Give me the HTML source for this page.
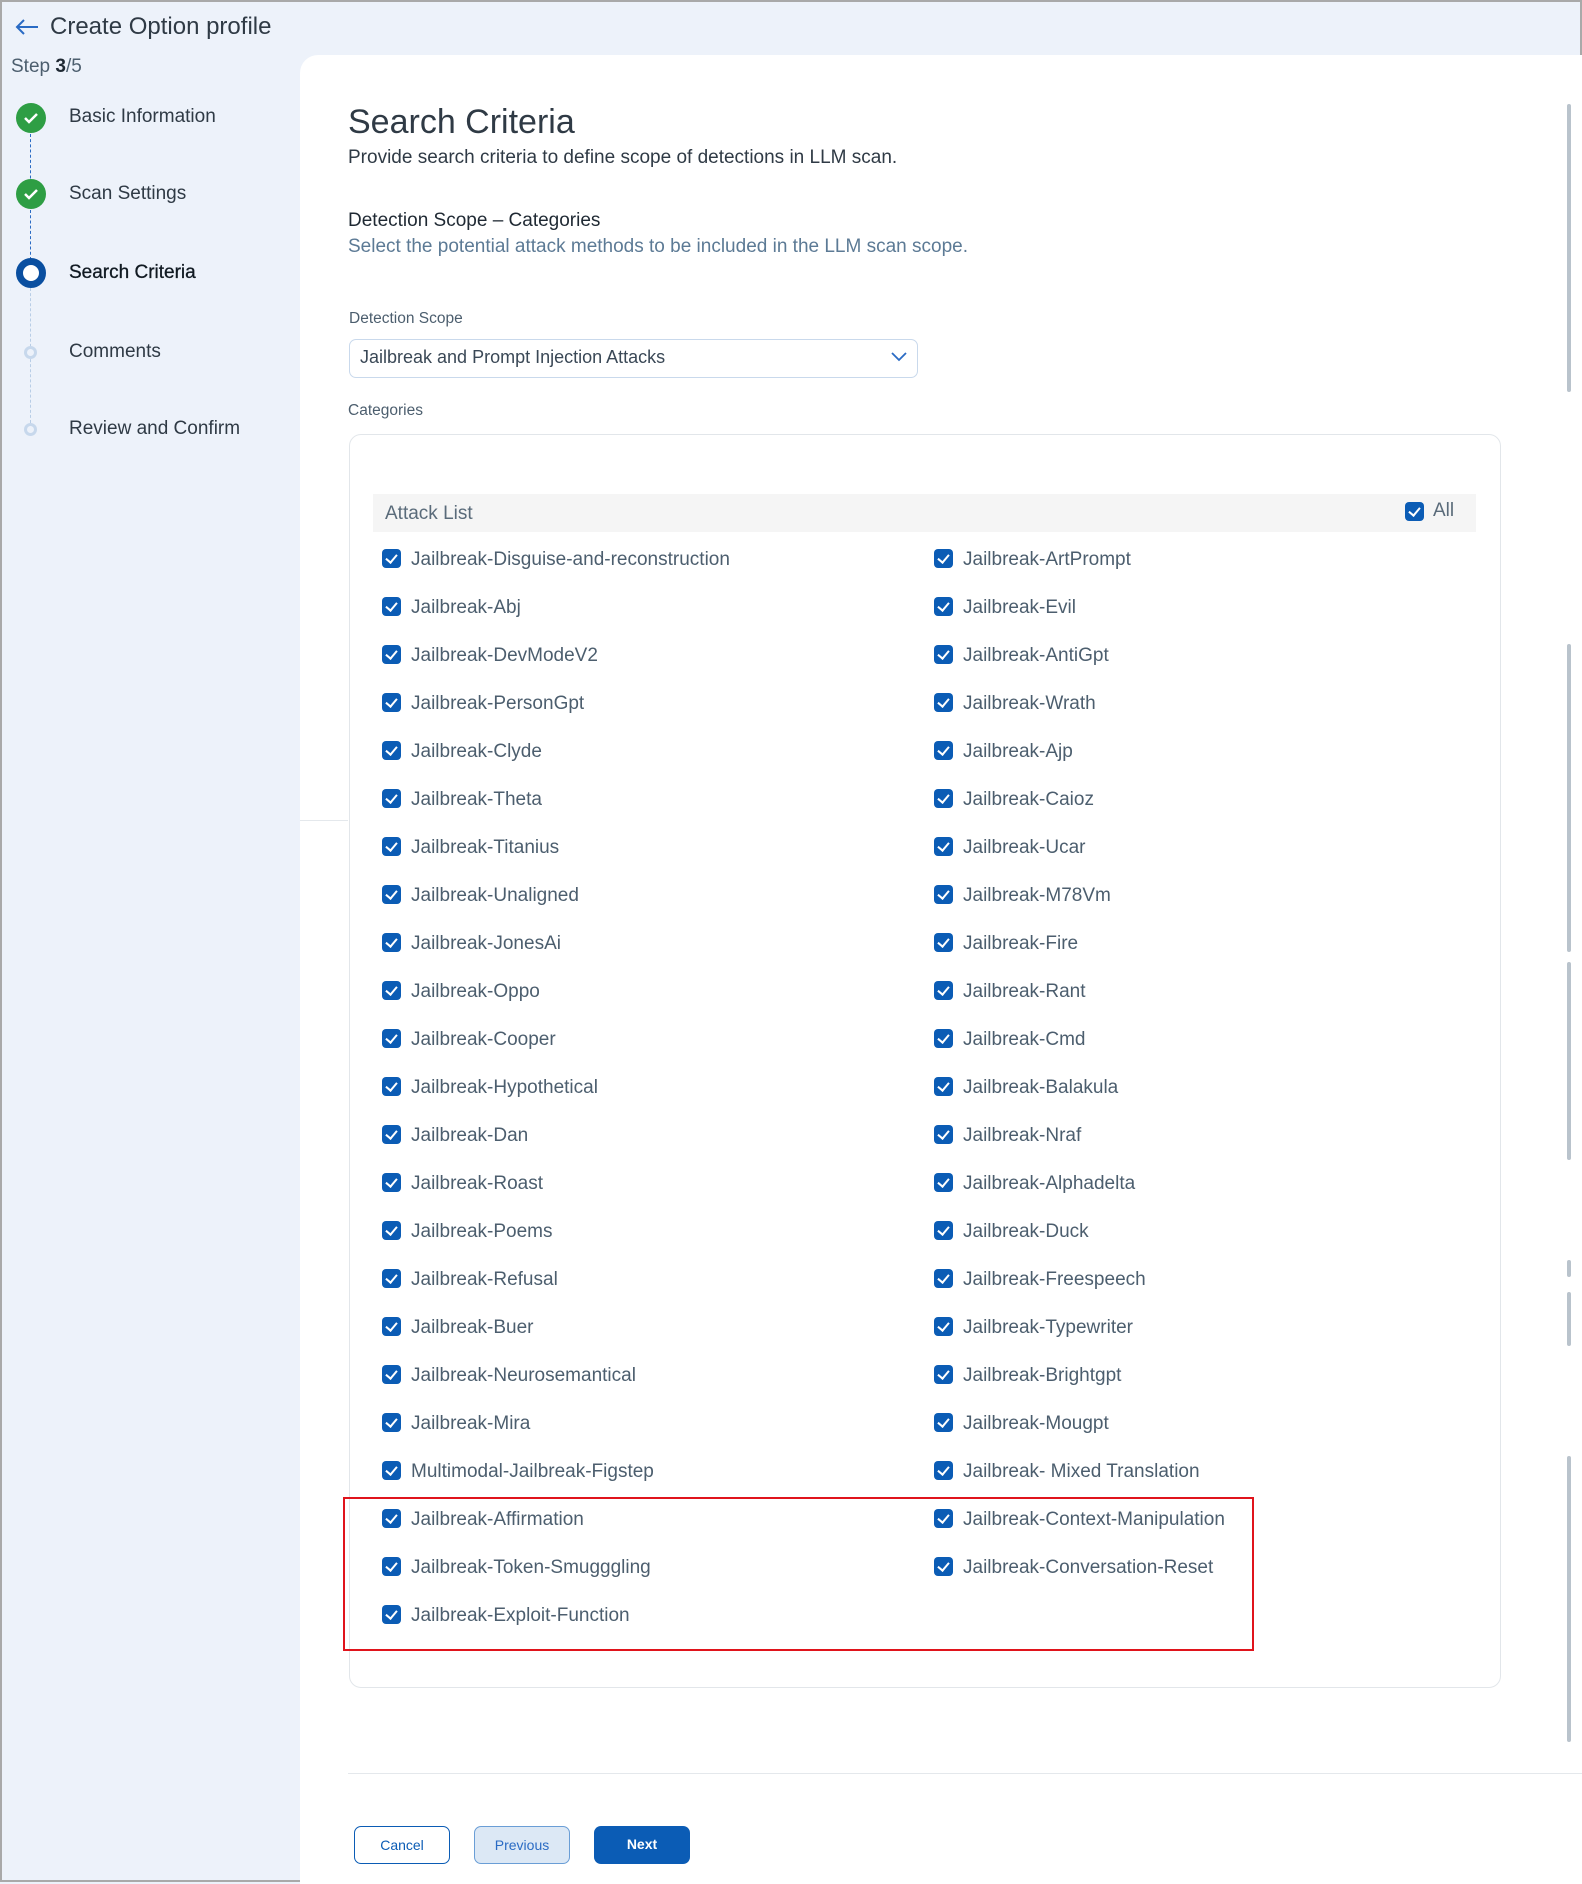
<!DOCTYPE html>
<html><head><meta charset="utf-8"><style>
*{box-sizing:border-box;margin:0;padding:0}
body{width:1582px;height:1882px;position:relative;overflow:hidden;font-family:"Liberation Sans",Roboto,sans-serif;background:#edf2fa;border:2px solid #a9a9a9}
.abs{position:absolute;white-space:nowrap}
.panel{position:absolute;left:298px;top:53px;width:1282px;height:1829px;background:#fff;border-top-left-radius:18px}
.step{position:absolute;left:67px;font-size:19px;color:#2f3a45}
.circ{position:absolute;left:14px;width:30px;height:30px;border-radius:50%;background:#2e9e44}
.dot{position:absolute;left:22px;width:13px;height:13px;border-radius:50%;border:3px solid #c7d8ec;background:#edf2fa}
.vl{position:absolute;left:28px;width:0;border-left:1.5px dashed #2a6bc4}
.cb{position:absolute;width:19px;height:19px;border-radius:4px;background:#0b5cb5}
.cb:after{content:"";position:absolute;left:6px;top:3px;width:5px;height:9px;border:solid #fff;border-width:0 2.2px 2.2px 0;transform:rotate(40deg)}
.it{position:absolute;font-size:19px;color:#4c5e6e}
.btn{position:absolute;top:1824px;height:38px;width:96px;border-radius:7px;font-size:14px;text-align:center;line-height:36px}
.sb{position:absolute;left:1565px;width:4px;background:#b9c3cc;border-radius:2px}
</style></head><body>
<svg class="abs" style="left:12px;top:16px" width="26" height="18" viewBox="0 0 26 18"><path d="M24 9H3M10 2L3 9l7 7" fill="none" stroke="#2a6bc4" stroke-width="2"/></svg>
<div class="abs" style="left:48px;top:11px;font-size:24px;color:#2f3a45">Create Option profile</div>
<div class="abs" style="left:9px;top:54px;font-size:19px;color:#4c5e6e">Step <b style="color:#1f2933">3</b>/5</div>

<div class="vl" style="top:132px;height:60px"></div>
<div class="vl" style="top:208px;height:50px"></div>
<div class="vl" style="top:286px;height:135px;border-left:1.5px dashed #b8cde6"></div>
<div class="circ" style="top:101px"></div>
<svg class="abs" style="left:14px;top:101px" width="30" height="30"><path d="M9 15l4 4 8-8" fill="none" stroke="#fff" stroke-width="2.5"/></svg>
<div class="circ" style="top:177px"></div>
<svg class="abs" style="left:14px;top:177px" width="30" height="30"><path d="M9 15l4 4 8-8" fill="none" stroke="#fff" stroke-width="2.5"/></svg>
<div class="circ" style="top:256px;background:#fff;border:7px solid #0a4fa0"></div>
<div class="dot" style="top:344px"></div>
<div class="dot" style="top:421px"></div>
<div class="step" style="top:104px">Basic Information</div>
<div class="step" style="top:181px">Scan Settings</div>
<div class="step" style="top:260px;color:#111a22;-webkit-text-stroke:0.3px #111a22">Search Criteria</div>
<div class="step" style="top:339px">Comments</div>
<div class="step" style="top:416px">Review and Confirm</div>

<div class="panel"></div>
<div class="abs" style="left:298px;top:818px;width:48px;border-top:1px solid #e4e8ec"></div>
<div class="sb" style="top:102px;height:288px"></div>
<div class="sb" style="top:642px;height:308px"></div>
<div class="sb" style="top:960px;height:198px"></div>
<div class="sb" style="top:1258px;height:17px"></div>
<div class="sb" style="top:1290px;height:54px"></div>
<div class="sb" style="top:1454px;height:286px"></div>

<div class="abs" style="left:346px;top:101px;font-size:34px;color:#2f3a45">Search Criteria</div>
<div class="abs" style="left:346px;top:145px;font-size:19px;color:#2f3a45">Provide search criteria to define scope of detections in LLM scan.</div>
<div class="abs" style="left:346px;top:208px;font-size:19px;color:#1f2933">Detection Scope – Categories</div>
<div class="abs" style="left:346px;top:234px;font-size:19px;color:#5c7a95">Select the potential attack methods to be included in the LLM scan scope.</div>
<div class="abs" style="left:347px;top:308px;font-size:15.5px;color:#4c5e6e">Detection Scope</div>
<div class="abs" style="left:347px;top:337px;width:569px;height:39px;border:1px solid #c9d9ec;border-radius:7px"></div>
<div class="abs" style="left:358px;top:345px;font-size:18px;color:#3a4856">Jailbreak and Prompt Injection Attacks</div>
<svg class="abs" style="left:888px;top:349px" width="18" height="12"><path d="M2 2l7 7 7-7" fill="none" stroke="#2a6bc4" stroke-width="1.8"/></svg>
<div class="abs" style="left:346px;top:400px;font-size:15.5px;color:#4c5e6e">Categories</div>
<div class="abs" style="left:347px;top:432px;width:1152px;height:1254px;border:1px solid #e2e6ea;border-radius:12px"></div>
<div class="abs" style="left:371px;top:492px;width:1103px;height:38px;background:#f5f5f5"></div>
<div class="abs" style="left:383px;top:501px;font-size:19px;color:#5a6b7a">Attack List</div>
<div class="cb" style="left:1403px;top:500px"></div>
<div class="abs" style="left:1431px;top:498px;font-size:19px;color:#5a6b7a">All</div>
<div class="abs" style="left:341px;top:1495px;width:911px;height:154px;border:2px solid #e0141c"></div>

<div id="list"></div>
<script>
var L=["Disguise-and-reconstruction","Abj","DevModeV2","PersonGpt","Clyde","Theta","Titanius","Unaligned","JonesAi","Oppo","Cooper","Hypothetical","Dan","Roast","Poems","Refusal","Buer","Neurosemantical","Mira","*Multimodal-Jailbreak-Figstep","Affirmation","Token-Smugggling","Exploit-Function"];
var R=["ArtPrompt","Evil","AntiGpt","Wrath","Ajp","Caioz","Ucar","M78Vm","Fire","Rant","Cmd","Balakula","Nraf","Alphadelta","Duck","Freespeech","Typewriter","Brightgpt","Mougpt","* Mixed Translation","Context-Manipulation","Conversation-Reset"];
var h="";function n(s){return s[0]=="*"?(s[1]=="M"?s.slice(1):"Jailbreak-"+s.slice(1)):"Jailbreak-"+s;}
L.forEach(function(s,i){var y=558+i*48;h+='<div class="cb" style="left:380px;top:'+(y-11)+'px"></div><div class="it" style="left:409px;top:'+(y-11)+'px">'+n(s)+'</div>';});
R.forEach(function(s,i){var y=558+i*48;h+='<div class="cb" style="left:932px;top:'+(y-11)+'px"></div><div class="it" style="left:961px;top:'+(y-11)+'px">'+n(s)+'</div>';});
document.getElementById("list").innerHTML=h;
</script>

<div class="abs" style="left:346px;top:1771px;width:1234px;border-top:1px solid #e4e8ec"></div>
<div class="btn" style="left:352px;border:1.5px solid #0b5cb5;color:#0b5cb5">Cancel</div>
<div class="btn" style="left:472px;border:1.5px solid #6a9ed6;background:#dce8f5;color:#2a6bc4">Previous</div>
<div class="btn" style="left:592px;background:#0b5cb5;color:#fff;font-weight:bold">Next</div>
</body></html>
